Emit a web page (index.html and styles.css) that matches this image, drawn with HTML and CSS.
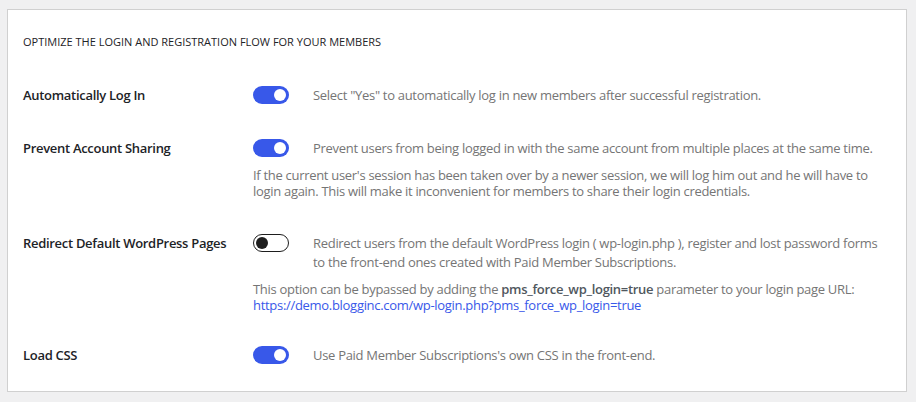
FILE: index.html
```html
<!DOCTYPE html>
<html>
<head>
<meta charset="utf-8">
<link rel="stylesheet" href="styles.css">
</head>
<body>
<div class="card">
  <h3 class="title">OPTIMIZE THE LOGIN AND REGISTRATION FLOW FOR YOUR MEMBERS</h3>

  <div class="row r1">
    <div class="label">Automatically Log In</div>
    <div class="field">
      <div class="line">
        <span class="toggle on"></span>
        <p class="desc">Select "Yes" to automatically log in new members after successful registration.</p>
      </div>
    </div>
  </div>

  <div class="row r2">
    <div class="label">Prevent Account Sharing</div>
    <div class="field">
      <div class="line">
        <span class="toggle on"></span>
        <p class="desc">Prevent users from being logged in with the same account from multiple places at the same time.</p>
      </div>
      <p class="extra">If the current user's session has been taken over by a newer session, we will log him out and he will have to login again. This will make it inconvenient for members to share their login credentials.</p>
    </div>
  </div>

  <div class="row r3">
    <div class="label">Redirect Default WordPress Pages</div>
    <div class="field">
      <div class="line">
        <span class="toggle off"></span>
        <p class="desc">Redirect users from the default WordPress login ( wp-login.php ), register and lost password forms to the front-end ones created with Paid Member Subscriptions.</p>
      </div>
      <p class="extra">This option can be bypassed by adding the <strong>pms_force_wp_login=true</strong> parameter to your login page URL:<br><a href="#">https://demo.blogginc.com/wp-login.php?pms_force_wp_login=true</a></p>
    </div>
  </div>

  <div class="row r4">
    <div class="label">Load CSS</div>
    <div class="field">
      <div class="line">
        <span class="toggle on"></span>
        <p class="desc">Use Paid Member Subscriptions's own CSS in the front-end.</p>
      </div>
    </div>
  </div>
</div>
</body>
</html>
```

FILE: styles.css
```css
html, body {
  margin: 0;
  padding: 0;
  background: #f0f0f1;
}
body {
  padding: 9px 9px 0 7px;
  font-family: "Open Sans", "Noto Sans", sans-serif;
  color: #1d2327;
}
.card {
  background: #fff;
  border: 1px solid #d0d0d0;
  padding: 24px 23px 26px 15px;
}
.title {
  margin: 0 0 36px;
  font-size: 11px;
  font-weight: 400;
  line-height: 16px;
  color: #1d2327;
}
.row {
  display: flex;
  align-items: flex-start;
}
.r2 { margin-top: 34px; }
.r3 { margin-top: 35px; }
.r4 { margin-top: 33px; }
.label {
  width: 230px;
  flex: none;
  font-size: 13px;
  font-weight: 600;
  letter-spacing: -0.3px;
  line-height: 18px;
  color: #1d2327;
  white-space: nowrap;
}
.field {
  flex: 1;
  min-width: 0;
}
.line {
  display: flex;
  align-items: flex-start;
}
.toggle {
  flex: none;
  width: 36px;
  height: 18px;
  border-radius: 9px;
  box-sizing: border-box;
  position: relative;
  margin-right: 24px;
}
.toggle.on {
  background: #3858e9;
}
.toggle.on::after {
  content: "";
  position: absolute;
  right: 3px;
  top: 3px;
  width: 12px;
  height: 12px;
  border-radius: 50%;
  background: #fff;
}
.toggle.off {
  background: #fff;
  border: 1px solid #1e1e1e;
}
.toggle.off::after {
  content: "";
  position: absolute;
  left: 2px;
  top: 2px;
  width: 12px;
  height: 12px;
  border-radius: 50%;
  background: #1e1e1e;
}
.desc {
  margin: 0;
  font-size: 13px;
  letter-spacing: -0.3px;
  line-height: 18.5px;
  color: #757575;
  flex: 1;
}
.extra {
  margin: 10px 0 0;
  font-size: 13px;
  letter-spacing: -0.3px;
  line-height: 16px;
  color: #757575;
}
.extra strong {
  font-weight: 600;
  color: #50575e;
}
.extra a {
  color: #3858e9;
  text-decoration: none;
}
```
